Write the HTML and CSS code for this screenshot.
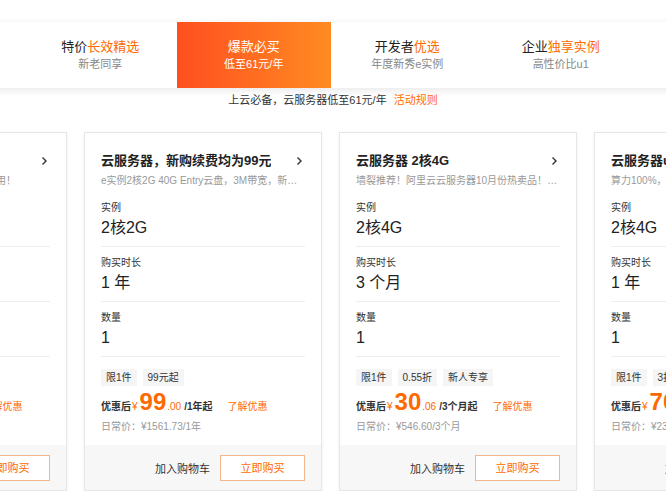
FILE: index.html
```html
<!DOCTYPE html>
<html>
	<head>
		<meta charset="utf-8">
		<title>云服务器特惠</title>
		<link rel="stylesheet" href="styles.css">
	</head>
	<body>
		<!-- 顶部活动切换 -->
		<div class="tabs">
			<div class="tab">
				<div class="tab_tt">新人专区 <em>首购专享</em></div>
				<div class="tab_sub">新用户专享</div>
			</div>
			<div class="tab">
				<div class="tab_tt">特价<em>长效精选</em></div>
				<div class="tab_sub">新老同享</div>
			</div>
			<div class="tab active">
				<div class="tab_tt">爆款必买</div>
				<div class="tab_sub">低至61元/年</div>
			</div>
			<div class="tab">
				<div class="tab_tt">开发者<em>优选</em></div>
				<div class="tab_sub">年度新秀e实例</div>
			</div>
			<div class="tab">
				<div class="tab_tt">企业<em>独享实例</em></div>
				<div class="tab_sub">高性价比u1</div>
			</div>
			<div class="tab">
				<div class="tab_tt">更多<em>特惠</em></div>
				<div class="tab_sub">热门产品</div>
			</div>
		</div>
		<p class="notice">上云必备，云服务器低至61元/年<a href="#">活动规则</a></p>

		<!-- 商品卡片 -->
		<div class="cards">
			<div class="card">
				<div class="card_bd">
					<div class="card_hd">
						<h3>云服务器 经济型e实例</h3>
						<svg width="7" height="10" viewBox="0 0 7 10"><polyline points="1.5,1.5 5,5 1.5,8.5" fill="none" stroke="#333" stroke-width="1.4"/></svg>
					</div>
					<p class="desc">入门首选，建站与开发测试场景适用！</p>
					<div class="field"><div class="label">实例</div><div class="value">2核2G</div></div>
					<div class="field"><div class="label">购买时长</div><div class="value">3 个月</div></div>
					<div class="field"><div class="label">数量</div><div class="value">1</div></div>
					<div class="tags"><span>限1件</span><span>新人专享</span></div>
					<div class="price">
						<span class="pre">优惠后</span><span class="cny">¥</span><span class="num">39</span><span class="dec">.00</span><span class="unit">/3个月起</span><a class="more" href="#">了解优惠</a>
					</div>
					<p class="origin">日常价：¥468.00/3个月</p>
				</div>
				<div class="card_ft"><span>加入购物车</span><a class="buy" href="#">立即购买</a></div>
			</div>

			<div class="card">
				<div class="card_bd">
					<div class="card_hd">
						<h3>云服务器，新购续费均为99元</h3>
						<svg width="7" height="10" viewBox="0 0 7 10"><polyline points="1.5,1.5 5,5 1.5,8.5" fill="none" stroke="#333" stroke-width="1.4"/></svg>
					</div>
					<p class="desc">e实例2核2G 40G Entry云盘，3M带宽，新老同享，续费同价</p>
					<div class="field"><div class="label">实例</div><div class="value">2核2G</div></div>
					<div class="field"><div class="label">购买时长</div><div class="value">1 年</div></div>
					<div class="field"><div class="label">数量</div><div class="value">1</div></div>
					<div class="tags"><span>限1件</span><span>99元起</span></div>
					<div class="price">
						<span class="pre">优惠后</span><span class="cny">¥</span><span class="num">99</span><span class="dec">.00</span><span class="unit">/1年起</span><a class="more" href="#">了解优惠</a>
					</div>
					<p class="origin">日常价：¥1561.73/1年</p>
				</div>
				<div class="card_ft"><span>加入购物车</span><a class="buy" href="#">立即购买</a></div>
			</div>

			<div class="card">
				<div class="card_bd">
					<div class="card_hd">
						<h3>云服务器 2核4G</h3>
						<svg width="7" height="10" viewBox="0 0 7 10"><polyline points="1.5,1.5 5,5 1.5,8.5" fill="none" stroke="#333" stroke-width="1.4"/></svg>
					</div>
					<p class="desc">墙裂推荐！阿里云云服务器10月份热卖品！1000+用户选择</p>
					<div class="field"><div class="label">实例</div><div class="value">2核4G</div></div>
					<div class="field"><div class="label">购买时长</div><div class="value">3 个月</div></div>
					<div class="field"><div class="label">数量</div><div class="value">1</div></div>
					<div class="tags"><span>限1件</span><span>0.55折</span><span>新人专享</span></div>
					<div class="price">
						<span class="pre">优惠后</span><span class="cny">¥</span><span class="num">30</span><span class="dec">.06</span><span class="unit">/3个月起</span><a class="more" href="#">了解优惠</a>
					</div>
					<p class="origin">日常价：¥546.60/3个月</p>
				</div>
				<div class="card_ft"><span>加入购物车</span><a class="buy" href="#">立即购买</a></div>
			</div>

			<div class="card">
				<div class="card_bd">
					<div class="card_hd">
						<h3>云服务器u1 企业独享</h3>
						<svg width="7" height="10" viewBox="0 0 7 10"><polyline points="1.5,1.5 5,5 1.5,8.5" fill="none" stroke="#333" stroke-width="1.4"/></svg>
					</div>
					<p class="desc">算力100%，适用于中小企业核心业务</p>
					<div class="field"><div class="label">实例</div><div class="value">2核4G</div></div>
					<div class="field"><div class="label">购买时长</div><div class="value">1 年</div></div>
					<div class="field"><div class="label">数量</div><div class="value">1</div></div>
					<div class="tags"><span>限1件</span><span>3折</span></div>
					<div class="price">
						<span class="pre">优惠后</span><span class="cny">¥</span><span class="num">70</span><span class="dec">.80</span><span class="unit">/1年起</span><a class="more" href="#">了解优惠</a>
					</div>
					<p class="origin">日常价：¥2359.80/1年</p>
				</div>
				<div class="card_ft"><span>加入购物车</span><a class="buy" href="#">立即购买</a></div>
			</div>
		</div>
	</body>
</html>
```

FILE: styles.css
```css
*{
	margin: 0;
	padding: 0;
	box-sizing: border-box;
}
body{
	width: 666px;
	overflow: hidden;
	background: #fff;
	color: #333;
	font-family: "Liberation Sans", "Noto Sans CJK SC", sans-serif;
}
a{
	color: #ff6a00;
	text-decoration: none;
}
em{
	font-style: normal;
	color: #ff6a00;
}

/* 顶部切换 */
.tabs{
	display: flex;
	width: 930px;
	height: 66px;
	margin: 22px 0 0 -130px;
	background: #fff;
	box-shadow: 0 2px 8px rgba(0,0,0,.1);
}
.tab{
	flex: 0 0 153.5px;
	padding-top: 16px;
	text-align: center;
}
.tab_tt{
	font-size: 13px;
	line-height: 18px;
	color: #222;
}
.tab_sub{
	font-size: 11px;
	line-height: 16px;
	color: #888;
}
.tab.active{
	background: linear-gradient(90deg, #ff4f1f, #ff8b22);
}
.tab.active .tab_tt,
.tab.active .tab_sub{
	color: #fff;
}
.notice{
	margin-top: 4px;
	font-size: 11px;
	line-height: 16px;
	text-align: center;
	color: #333;
}
.notice a{
	margin-left: 7px;
}

/* 卡片 */
.cards{
	display: flex;
	gap: 17px;
	margin: 24px 0 0 -171px;
}
.card{
	flex: 0 0 238px;
	min-width: 0;
	border: 1px solid #e6e6e6;
	background: #fff;
	box-shadow: 0 1px 4px rgba(0,0,0,.06);
}
.card_bd{
	padding: 18px 16px 11px;
}
.card_hd{
	display: flex;
	align-items: center;
	justify-content: space-between;
	height: 20px;
}
.card_hd h3{
	font-size: 13px;
	line-height: 20px;
	font-weight: bold;
	color: #222;
	white-space: nowrap;
	overflow: hidden;
}
.card_hd svg{
	flex: none;
	margin-right: 2px;
}
.desc{
	margin-top: 3px;
	font-size: 10px;
	line-height: 14px;
	color: #999;
	white-space: nowrap;
	overflow: hidden;
	text-overflow: ellipsis;
}
.field{
	padding: 8px 0 6px;
	border-bottom: 1px solid #eee;
}
.desc + .field{
	margin-top: 4px;
}
.label{
	font-size: 10px;
	line-height: 16px;
	color: #333;
}
.value{
	font-size: 16px;
	line-height: 24px;
	color: #222;
}
.tags{
	display: flex;
	gap: 6px;
	margin-top: 12px;
}
.tags span{
	padding: 0 5px;
	font-size: 10px;
	line-height: 17px;
	background: #f5f5f5;
	color: #333;
}
.price{
	display: flex;
	align-items: baseline;
	height: 24px;
	margin-top: 4px;
	white-space: nowrap;
}
.pre{
	font-size: 10px;
	font-weight: bold;
	color: #333;
}
.cny{
	margin: 0 2px 0 1px;
	font-size: 10px;
	color: #ff6a00;
}
.num{
	font-size: 24px;
	line-height: 24px;
	font-weight: bold;
	color: #ff6a00;
}
.dec{
	margin-left: 1px;
	font-size: 10px;
	color: #ff6a00;
}
.unit{
	margin-left: 3px;
	font-size: 10px;
	font-weight: bold;
	color: #333;
}
.more{
	margin-left: 15px;
	font-size: 10px;
}
.origin{
	margin-top: 6px;
	font-size: 10px;
	line-height: 14px;
	color: #999;
}
.card_ft{
	display: flex;
	align-items: center;
	justify-content: flex-end;
	gap: 10px;
	padding: 10px 16px 9px;
	background: #f7f7f7;
	font-size: 11px;
	color: #333;
}
.buy{
	width: 85px;
	height: 26px;
	line-height: 24px;
	text-align: center;
	border: 1px solid #f4b58a;
	background: #fff;
	font-size: 11px;
}
```
